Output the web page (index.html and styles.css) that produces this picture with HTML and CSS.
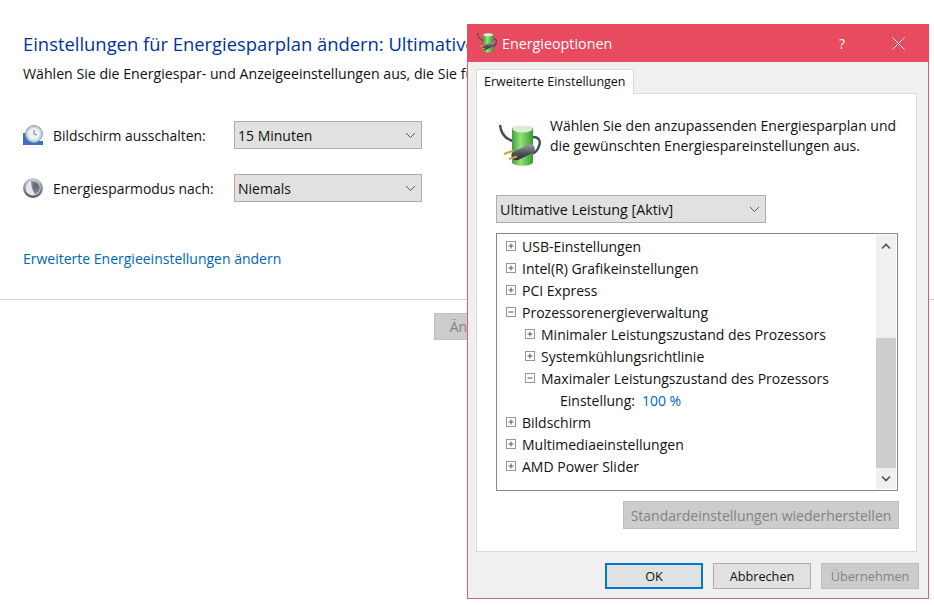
FILE: index.html
```html
<!DOCTYPE html>
<html lang="de">
<head>
<meta charset="utf-8">
<title>Energieoptionen</title>
<link rel="stylesheet" href="styles.css">
</head>
<body>
<svg class="defs" width="0" height="0" aria-hidden="true">
  <defs>
    <linearGradient id="bat" x1="0" x2="1" y1="0" y2="0">
      <stop offset="0" stop-color="#3f9f38"/><stop offset=".4" stop-color="#95e07a"/><stop offset="1" stop-color="#3a9a33"/>
    </linearGradient>
    <linearGradient id="plug" x1="0" x2="0" y1="0" y2="1">
      <stop offset="0" stop-color="#9a9fa6"/><stop offset=".6" stop-color="#4a4e55"/><stop offset="1" stop-color="#2a2d32"/>
    </linearGradient>
    <linearGradient id="moon" x1="0" x2="0" y1="0" y2="1">
      <stop offset="0" stop-color="#c9ccd2"/><stop offset="1" stop-color="#4e5564"/>
    </linearGradient>
    <radialGradient id="moonblob" cx=".55" cy=".4" r=".6">
      <stop offset="0" stop-color="#5a606c"/><stop offset="1" stop-color="#8d929c"/>
    </radialGradient>
    <symbol id="battery" viewBox="0 0 44 46">
      <path d="M2 2c1 9 5 14 13 16M35 14c6 0 8 4 6 9-1 4-4 7-8 8" fill="none" stroke="#454b58" stroke-width="2.400"/>
      <path d="M14 6c0-4 21-4 21 0v33c0 5-21 5-21 0z" fill="url(#bat)"/>
      <ellipse cx="24.500" cy="6" rx="10" ry="3.400" fill="#d9ecd4"/>
      <path d="M15 29l17-8c4-1 7 6 3 9l-15 7c-5 2-9-5-5-8z" fill="url(#plug)"/>
      <path d="M16 27.500L6 31M19 33.500L11 36" stroke="#c9a24a" stroke-width="2.200"/>
    </symbol>
    <symbol id="expand" viewBox="0 0 10 10">
      <rect x=".5" y=".5" width="9" height="9" fill="#fff" stroke="#959595"/>
      <path d="M2.500 5h5M5 2.500v5" stroke="#555"/>
    </symbol>
    <symbol id="collapse" viewBox="0 0 10 10">
      <rect x=".5" y=".5" width="9" height="9" fill="#fff" stroke="#959595"/>
      <path d="M2.500 5h5" stroke="#555"/>
    </symbol>
    <symbol id="chev" viewBox="0 0 11 7">
      <path d="M1 1l4.500 4.500L10 1" fill="none" stroke="#555"/>
    </symbol>
  </defs>
</svg>

<main class="page">
  <h1 class="heading">Einstellungen für Energiesparplan ändern: Ultimative Leistung</h1>
  <p class="intro">Wählen Sie die Energiespar- und Anzeigeeinstellungen aus, die Sie für den Computer verwenden möchten.</p>

  <div class="setting">
    <svg class="setting-icon" viewBox="0 0 20 20">
      <path d="M0 8h5v8h15v4H0z" fill="#3f6fc0"/>
      <circle cx="11" cy="9" r="8.500" fill="#c4d3e4" stroke="#8c9db3"/>
      <circle cx="11" cy="9" r="6" fill="#eef2f6"/>
      <path d="M11 5v4l3 1" fill="none" stroke="#77808c"/>
    </svg>
    <span class="setting-label">Bildschirm ausschalten:</span>
    <div class="select"><span>15 Minuten</span><svg class="chev"><use href="#chev"/></svg></div>
  </div>
  <div class="setting">
    <svg class="setting-icon" viewBox="0 0 20 20">
      <circle cx="10" cy="10" r="10" fill="url(#moon)"/>
      <circle cx="10" cy="10" r="7.500" fill="#e4e6ec"/>
      <path d="M8 3c5-.5 9 3 9 7 0 3-2 5.500-5 6.500C9.500 13 8 8 8 3z" fill="url(#moonblob)"/>
    </svg>
    <span class="setting-label">Energiesparmodus nach:</span>
    <div class="select"><span>Niemals</span><svg class="chev"><use href="#chev"/></svg></div>
  </div>

  <a class="link" href="#">Erweiterte Energieeinstellungen ändern</a>
  <hr class="rule">
  <div class="page-actions">
    <button class="btn page-btn" disabled>Änderungen speichern</button>
  </div>
</main>

<section class="dialog">
  <header class="titlebar">
    <svg class="title-icon"><use href="#battery"/></svg>
    <span class="title-text">Energieoptionen</span>
    <span class="help">?</span>
    <svg class="close" viewBox="0 0 13 13"><path d="M.5.5l12 12M12.500.5l-12 12" stroke="#fff" fill="none"/></svg>
  </header>
  <div class="dialog-body">
    <div class="tab">Erweiterte Einstellungen</div>
    <div class="pane">
      <div class="pane-head">
        <svg class="pane-icon"><use href="#battery"/></svg>
        <p class="pane-text">Wählen Sie den anzupassenden Energiesparplan und<br>die gewünschten Energiespareinstellungen aus.</p>
      </div>
      <div class="select plan"><span>Ultimative Leistung [Aktiv]</span><svg class="chev"><use href="#chev"/></svg></div>
      <div class="tree">
        <ul class="tree-list">
          <li class="row"><svg class="exp"><use href="#expand"/></svg>USB-Einstellungen</li>
          <li class="row"><svg class="exp"><use href="#expand"/></svg>Intel(R) Grafikeinstellungen</li>
          <li class="row"><svg class="exp"><use href="#expand"/></svg>PCI Express</li>
          <li class="row"><svg class="exp"><use href="#collapse"/></svg>Prozessorenergieverwaltung</li>
          <li class="row lvl2"><svg class="exp"><use href="#expand"/></svg>Minimaler Leistungszustand des Prozessors</li>
          <li class="row lvl2"><svg class="exp"><use href="#expand"/></svg>Systemkühlungsrichtlinie</li>
          <li class="row lvl2"><svg class="exp"><use href="#collapse"/></svg>Maximaler Leistungszustand des Prozessors</li>
          <li class="row lvl3">Einstellung:<span class="value">100 %</span></li>
          <li class="row"><svg class="exp"><use href="#expand"/></svg>Bildschirm</li>
          <li class="row"><svg class="exp"><use href="#expand"/></svg>Multimediaeinstellungen</li>
          <li class="row"><svg class="exp"><use href="#expand"/></svg>AMD Power Slider</li>
        </ul>
        <div class="scrollbar">
          <svg class="arrow arrow-up" viewBox="0 0 10 7"><path d="M1 5.500l4-4 4 4" fill="none" stroke="#505050" stroke-width="1.600"/></svg>
          <div class="track"><div class="thumb"></div></div>
          <svg class="arrow arrow-down" viewBox="0 0 10 7"><path d="M1 1.500l4 4 4-4" fill="none" stroke="#505050" stroke-width="1.600"/></svg>
        </div>
      </div>
      <div class="restore-row"><button class="btn restore" disabled>Standardeinstellungen wiederherstellen</button></div>
    </div>
    <div class="dialog-actions">
      <button class="btn ok">OK</button>
      <button class="btn">Abbrechen</button>
      <button class="btn" disabled>Übernehmen</button>
    </div>
  </div>
</section>
</body>
</html>
```
FILE: styles.css
```css
* { box-sizing: border-box; }
html, body { margin: 0; padding: 0; }
body {
  width: 934px;
  height: 605px;
  overflow: hidden;
  position: relative;
  background: #fff;
  color: #111;
  font-family: "Open Sans", "Noto Sans", sans-serif;
  font-size: 14px;
}
.defs { position: absolute; }
.page { padding-top: 31px; width: 934px; }
.heading {
  margin: 0 0 0 23px;
  font-size: 18.4px;
  line-height: 26px;
  font-weight: 400;
  color: #003399;
  white-space: nowrap;
}
.intro { margin: 7px 0 0 23px; font-size: 14.15px; line-height: 20px; white-space: nowrap; }
.setting { display: flex; align-items: center; height: 28px; margin: 0 0 25px 23px; }
.intro + .setting { margin-top: 37px; }
.setting-icon { width: 20px; height: 20px; flex: none; }
.setting-label { margin-left: 10px; width: 181px; flex: none; font-size: 13.9px; }
.select {
  display: flex;
  align-items: center;
  justify-content: space-between;
  width: 188px;
  height: 28px;
  padding: 0 5px 0 3px;
  background: #e1e1e1;
  border: 1px solid #adadad;
}
.chev { width: 11px; height: 7px; }
.link {
  display: block;
  margin: 47px 0 0 23px;
  line-height: 20px;
  color: #0066b4;
  text-decoration: none;
}
.rule { margin: 30px 0 0; border: 0; border-top: 1px solid #d0d0d0; }
.page-actions { padding: 13px 0 0 434px; }
.btn {
  font: inherit;
  color: #111;
  width: 98px;
  height: 26px;
  padding: 0;
  background: #e1e1e1;
  border: 1px solid #adadad;
  white-space: nowrap;
}
.btn:disabled { background: #cccccc; border-color: #bfbfbf; color: #838383; }
.page-btn { width: 180px; height: 27px; text-align: center; }

.dialog {
  position: absolute;
  left: 467px;
  top: 24px;
  width: 462px;
  height: 575px;
  display: flex;
  flex-direction: column;
  background: #f0f0f0;
  border: 1px solid #d8606c;
}
.titlebar {
  display: flex;
  align-items: center;
  height: 38px;
  flex: none;
  margin: -1px -1px 0;
  padding: 0 24px 0 9px;
  background: #e84a5f;
  color: #fff;
}
.title-icon { width: 22px; height: 22px; flex: none; }
.title-text { margin-left: 4px; flex: 1; font-size: 14.3px; }
.help { margin-right: 47px; font-size: 14px; }
.close { width: 13px; height: 13px; flex: none; }
.dialog-body { flex: 1; display: flex; flex-direction: column; padding: 7px 11px 9px 8px; }
.tab {
  width: 158px;
  height: 25px;
  margin-bottom: -1px;
  position: relative;
  z-index: 1;
  padding-left: 7px;
  font-size: 12.5px;
  line-height: 23px;
  background: #fff;
  border: 1px solid #d9d9d9;
  border-bottom: 0;
}
.pane {
  height: 459px;
  padding: 18px 18px 0 19px;
  background: #fff;
  border: 1px solid #d9d9d9;
}
.pane-head { display: flex; align-items: flex-start; height: 83px; }
.pane-icon { width: 44px; height: 46px; flex: none; margin: 11px 8px 0 2px; }
.pane-text { margin: 4px 0 0; line-height: 20px; white-space: nowrap; }
.plan { width: 270px; font-size: 14.3px; }
.tree {
  display: flex;
  justify-content: space-between;
  margin-top: 10px;
  width: 402px;
  height: 258px;
  padding: 1px;
  background: #fff;
  border: 1px solid #828790;
}
.tree-list { list-style: none; margin: 0; padding: 0 0 0 8px; }
.row { display: flex; align-items: center; height: 22px; white-space: nowrap; }
.exp { width: 10px; height: 10px; margin-right: 6px; flex: none; }
.lvl2 { padding-left: 19px; }
.lvl3 { padding-left: 54px; }
.value { margin-left: 7px; color: #0067b8; }
.scrollbar { display: flex; flex-direction: column; width: 20px; background: #f0f0f0; }
.arrow { width: 10px; height: 7px; margin: 0 auto; flex: none; }
.arrow-up { margin-top: 8px; margin-bottom: 6px; }
.arrow-down { margin-top: 7px; margin-bottom: 7px; }
.track { flex: 1; display: flex; flex-direction: column; justify-content: flex-end; }
.thumb { height: 130px; background: #cdcdcd; }
.restore-row { display: flex; justify-content: flex-end; margin: 10px -1px 0 0; }
.restore { width: 276px; height: 28px; }
.dialog-actions { display: flex; gap: 10px; justify-content: flex-end; margin: 11px -2px 0 0; font-size: 12.7px; }
.ok { border: 2px solid #0078d7; }
```
